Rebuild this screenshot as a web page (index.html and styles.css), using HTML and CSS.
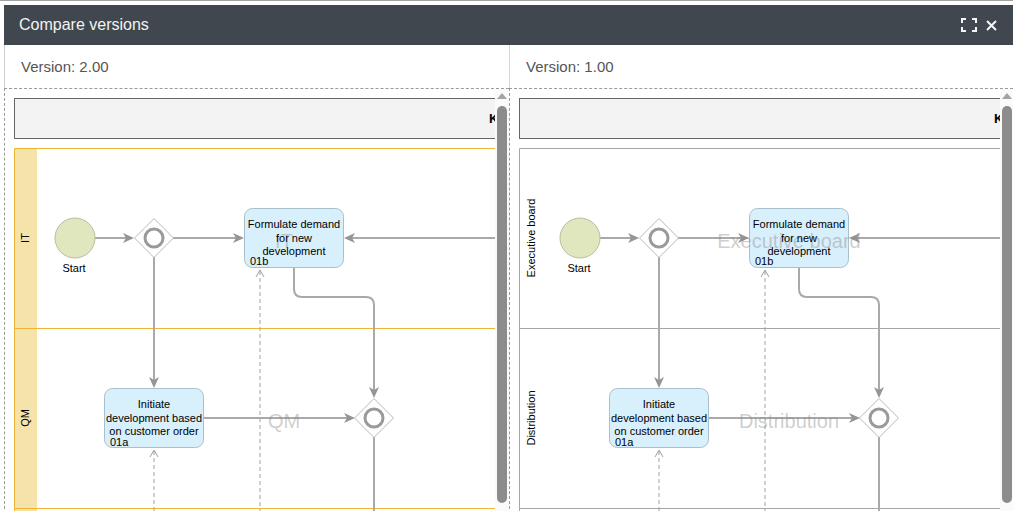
FILE: index.html
```html
<!DOCTYPE html>
<html lang="en">
<head>
<meta charset="utf-8">
<title>Compare versions</title>
<link rel="stylesheet" href="styles.css">
</head>
<body>
<div class="topline"></div>
<div class="dialog">
  <div class="header">
    <span class="title">Compare versions</span>
    <div class="actions">
      <svg class="icon-expand" width="16" height="14" viewBox="0 0 16 14"><path d="M1 5V1H5M11 1H15V5M15 9V13H11M5 13H1V9"/></svg>
      <svg class="icon-close" width="11" height="11" viewBox="0 0 11 11"><path d="M1 1L10 10M10 1L1 10"/></svg>
    </div>
  </div>
  <div class="panes">
    <section class="pane pane-left">
      <div class="version">Version: 2.00</div>
      <div class="canvas">
        <div class="viewport">
          <svg class="diagram" width="490" height="430" viewBox="5 89 490 430">
            <rect class="pool" x="14.5" y="98.5" width="600" height="40"/>
            <text class="pool-title" x="489" y="123">K</text>
            <rect class="lane-band" x="15" y="149" width="22" height="370"/>
            <path class="lanes lanes-orange" d="M14.5 148.5H600M14.5 328.5H600M14.5 508.5H600M14.5 148.5V520"/>
            <text class="lane-label" transform="translate(29 238) rotate(-90)">IT</text>
            <text class="lane-label" transform="translate(29 418) rotate(-90)">QM</text>

            <path class="dash" d="M260 271V520M154 451V520"/>
            <path class="open-head" d="M256 277L260 270L264 277M150 457L154 450L158 457"/>

            <path class="edge" d="M95 238H128M173 238H238M495 238H350M154 257V382M294 268V289Q294 297 302 297H366Q374 297 374 305V392M204 418H349M374 437V520"/>
            <path class="head" d="M134 238L123 233L126 238L123 243ZM244 238L233 233L236 238L233 243ZM344 238L355 233L352 238L355 243ZM154 388L149 377L154 380L159 377ZM374 398L369 387L374 390L379 387ZM355 418L344 413L347 418L344 423Z"/>

            <circle class="start" cx="75" cy="238" r="20"/>
            <polygon class="gw" points="154,218.5 173.5,238 154,257.5 134.5,238"/>
            <circle class="gw-ring" cx="154" cy="238" r="9"/>
            <polygon class="gw" points="374,398.5 393.5,418 374,437.5 354.5,418"/>
            <circle class="gw-ring" cx="374" cy="418" r="9"/>
            <rect class="task" x="244.5" y="208.5" width="99" height="59" rx="8"/>
            <rect class="task" x="104.5" y="388.5" width="99" height="59" rx="8"/>

            <text class="watermark" x="284" y="248">IT</text>
            <text class="watermark" x="284" y="428">QM</text>

            <text class="label" x="74" y="272">Start</text>
            <text class="label" x="294" y="228">Formulate demand</text>
            <text class="label" x="294" y="241.5">for new</text>
            <text class="label" x="294" y="255">development</text>
            <text class="code" x="250" y="265">01b</text>
            <text class="label" x="154" y="408">Initiate</text>
            <text class="label" x="154" y="421.5">development based</text>
            <text class="label" x="154" y="435">on customer order</text>
            <text class="code" x="110" y="446">01a</text>
          </svg>
        </div>
        <div class="scrollbar"><span class="arrow"></span><span class="thumb"></span></div>
      </div>
    </section>
    <section class="pane pane-right">
      <div class="version">Version: 1.00</div>
      <div class="canvas">
        <div class="viewport">
          <svg class="diagram" width="490" height="430" viewBox="5 89 490 430">
            <rect class="pool" x="14.5" y="98.5" width="600" height="40"/>
            <text class="pool-title" x="489" y="123">K</text>
            <path class="lanes lanes-gray" d="M14.5 148.5H600M14.5 328.5H600M14.5 508.5H600M14.5 148.5V520"/>
            <text class="lane-label" transform="translate(29.5 238) rotate(-90)">Executive board</text>
            <text class="lane-label" transform="translate(29.5 418) rotate(-90)">Distribution</text>

            <path class="dash" d="M260 271V520M154 451V520"/>
            <path class="open-head" d="M256 277L260 270L264 277M150 457L154 450L158 457"/>

            <path class="edge" d="M95 238H128M173 238H238M495 238H350M154 257V382M294 268V289Q294 297 302 297H366Q374 297 374 305V392M204 418H349M374 437V520"/>
            <path class="head" d="M134 238L123 233L126 238L123 243ZM244 238L233 233L236 238L233 243ZM344 238L355 233L352 238L355 243ZM154 388L149 377L154 380L159 377ZM374 398L369 387L374 390L379 387ZM355 418L344 413L347 418L344 423Z"/>

            <circle class="start" cx="75" cy="238" r="20"/>
            <polygon class="gw" points="154,218.5 173.5,238 154,257.5 134.5,238"/>
            <circle class="gw-ring" cx="154" cy="238" r="9"/>
            <polygon class="gw" points="374,398.5 393.5,418 374,437.5 354.5,418"/>
            <circle class="gw-ring" cx="374" cy="418" r="9"/>
            <rect class="task" x="244.5" y="208.5" width="99" height="59" rx="8"/>
            <rect class="task" x="104.5" y="388.5" width="99" height="59" rx="8"/>

            <text class="watermark" x="284" y="248">Executive board</text>
            <text class="watermark" x="284" y="428">Distribution</text>

            <text class="label" x="74" y="272">Start</text>
            <text class="label" x="294" y="228">Formulate demand</text>
            <text class="label" x="294" y="241.5">for new</text>
            <text class="label" x="294" y="255">development</text>
            <text class="code" x="250" y="265">01b</text>
            <text class="label" x="154" y="408">Initiate</text>
            <text class="label" x="154" y="421.5">development based</text>
            <text class="label" x="154" y="435">on customer order</text>
            <text class="code" x="110" y="446">01a</text>
          </svg>
        </div>
        <div class="scrollbar"><span class="arrow"></span><span class="thumb"></span></div>
      </div>
    </section>
  </div>
</div>
</body>
</html>
```
FILE: styles.css
```css
html, body {
  margin: 0;
  padding: 0;
  background: #fff;
  overflow: hidden;
  font-family: "Liberation Sans", Arial, sans-serif;
}

.topline {
  height: 1px;
  background: #a3a3a3;
}

.dialog {
  margin: 4px 0 0 4px;
}

.header {
  height: 40px;
  background: #40474f;
  display: flex;
  align-items: center;
  justify-content: space-between;
  padding: 0 16px 0 15px;
}

.title {
  color: #f3f3f3;
  font-size: 16px;
}

.actions {
  display: flex;
  align-items: center;
  gap: 9px;
}

.actions svg {
  display: block;
  fill: none;
  stroke: #f5f5f5;
  stroke-width: 2;
}

.panes {
  display: grid;
  grid-template-columns: 505px 504px;
}

.version {
  height: 43px;
  display: flex;
  align-items: center;
  padding-left: 16px;
  font-size: 15px;
  color: #555;
}

.pane-left .version {
  border-left: 1px solid #cfcfcf;
}

.pane-right .version {
  border-left: 1px solid #d6d6d6;
}

.canvas {
  display: flex;
  height: 430px;
  border-top: 1px dashed #9a9a9a;
  border-left: 1px dashed #9a9a9a;
}

.viewport {
  width: 490px;
  flex: none;
  overflow: hidden;
}

.diagram {
  display: block;
}

.scrollbar {
  flex: 1;
  background: #fafafa;
  display: flex;
  flex-direction: column;
  align-items: flex-start;
  padding: 4px 0 0 2px;
}

.arrow {
  width: 0;
  height: 0;
  border-left: 5px solid transparent;
  border-right: 5px solid transparent;
  border-bottom: 6px solid #a3a3a3;
}

.thumb {
  margin-top: 7px;
  width: 10px;
  height: 397px;
  border-radius: 5px;
  background: #8c8c8c;
}

/* diagram */
.pool {
  fill: #f3f3f3;
  stroke: #666;
  stroke-width: 1;
}

.pool-title {
  font: bold 13px "Liberation Sans", Arial, sans-serif;
  fill: #000;
}

.lane-band {
  fill: #f5e3a9;
}

.lanes {
  fill: none;
  stroke-width: 1;
}

.lanes-orange {
  stroke: #efb337;
}

.lanes-gray {
  stroke: #a6a6a6;
}

.lane-label {
  font: 11px "Liberation Sans", Arial, sans-serif;
  fill: #000;
  text-anchor: middle;
}

.edge {
  fill: none;
  stroke: #a9a9a9;
  stroke-width: 2;
}

.head {
  fill: #959595;
}

.dash {
  fill: none;
  stroke: #a0a0a0;
  stroke-width: 1;
  stroke-dasharray: 4 3;
}

.open-head {
  fill: none;
  stroke: #a0a0a0;
  stroke-width: 1;
}

.start {
  fill: #e0e7bf;
  stroke: #b9bea0;
  stroke-width: 1;
}

.gw {
  fill: #fff;
  stroke: #b8b8b8;
  stroke-width: 1;
}

.gw-ring {
  fill: #fff;
  stroke: #9a9a9a;
  stroke-width: 3;
}

.task {
  fill: #d8effc;
  stroke: #a8c0cc;
  stroke-width: 1;
}

.watermark {
  font: 20px "Liberation Sans", Arial, sans-serif;
  fill: #8a8a8a;
  fill-opacity: 0.42;
  text-anchor: middle;
}

.label {
  font: 11px "Liberation Sans", Arial, sans-serif;
  fill: #000;
  text-anchor: middle;
}

.code {
  font: 11px "Liberation Sans", Arial, sans-serif;
  fill: #000;
}
```
